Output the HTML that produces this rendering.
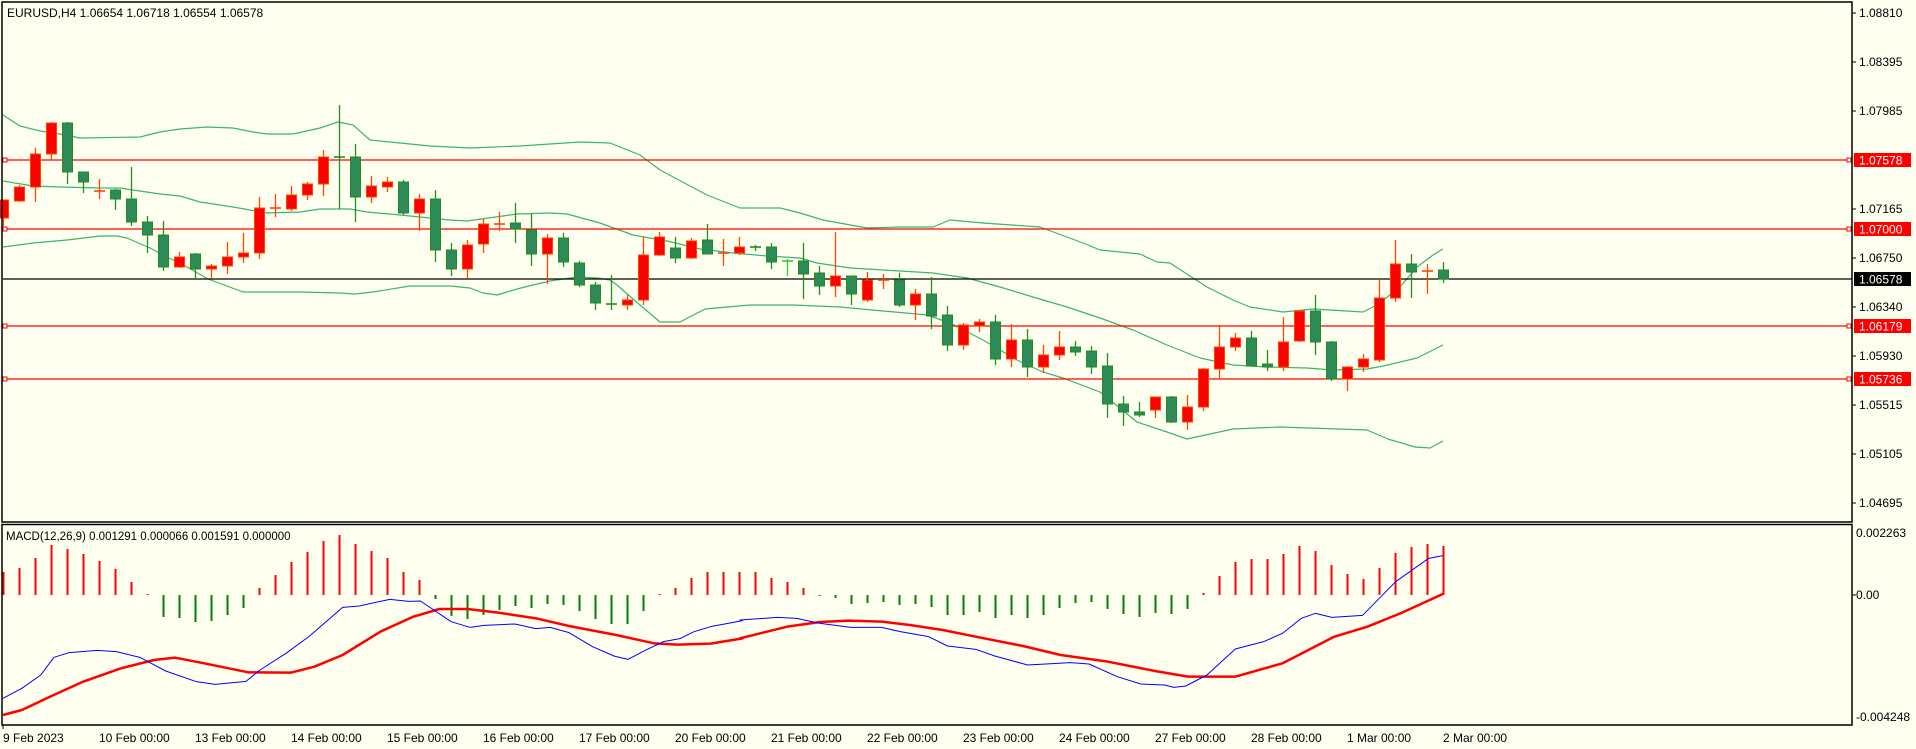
<!DOCTYPE html>
<html><head><meta charset="utf-8"><style>
html,body{margin:0;padding:0;background:#FFFFF0;}
svg{display:block;font-family:"Liberation Sans",sans-serif;font-size:12px;}
</style></head><body>
<svg id="c" width="1916" height="749" viewBox="0 0 1916 749" xmlns="http://www.w3.org/2000/svg">
<rect width="1916" height="749" fill="#FFFFF0"/>
<g id="bands" fill="none" stroke="#3CB371" stroke-width="1.2"></g>
<g id="hl"></g>
<g id="cand"></g>
<g id="macd"></g>
<rect x="2" y="2" width="1850" height="520" fill="none" stroke="#000" stroke-width="1.5"/>
<rect x="2" y="524.5" width="1850" height="200.5" fill="none" stroke="#000" stroke-width="1.5"/>
<text x="7" y="17" fill="#000">EURUSD,H4  1.06654 1.06718 1.06554 1.06578</text>
<text x="6" y="540" fill="#000" font-size="11.5">MACD(12,26,9) 0.001291 0.000066 0.001591 0.000000</text>
<g fill="#000" font-size="12">
<text x="1859" y="17">1.08810</text>
<text x="1859" y="66">1.08395</text>
<text x="1859" y="115">1.07985</text>
<text x="1859" y="213">1.07165</text>
<text x="1859" y="262">1.06750</text>
<text x="1859" y="311">1.06340</text>
<text x="1859" y="360">1.05930</text>
<text x="1859" y="409">1.05515</text>
<text x="1859" y="458">1.05105</text>
<text x="1859" y="507">1.04695</text>
<text x="1856" y="537">0.002263</text>
<text x="1856" y="599">0.00</text>
<text x="1856" y="721">-0.004248</text>
</g>
<g stroke="#000" stroke-width="1">
<line x1="1852" y1="13" x2="1856" y2="13"/><line x1="1852" y1="62" x2="1856" y2="62"/><line x1="1852" y1="111" x2="1856" y2="111"/><line x1="1852" y1="209" x2="1856" y2="209"/><line x1="1852" y1="258" x2="1856" y2="258"/><line x1="1852" y1="307" x2="1856" y2="307"/><line x1="1852" y1="356" x2="1856" y2="356"/><line x1="1852" y1="405" x2="1856" y2="405"/><line x1="1852" y1="454" x2="1856" y2="454"/><line x1="1852" y1="503" x2="1856" y2="503"/><line x1="1852" y1="595" x2="1856" y2="595"/>
</g>
<g font-size="12">
<rect x="1854" y="153" width="57" height="14" fill="#FF0000"/><text x="1859" y="164.5" fill="#fff">1.07578</text>
<rect x="1854" y="222" width="57" height="14" fill="#FF0000"/><text x="1859" y="233.5" fill="#fff">1.07000</text>
<rect x="1854" y="272" width="57" height="14" fill="#000"/><text x="1859" y="283.5" fill="#fff">1.06578</text>
<rect x="1854" y="319" width="57" height="14" fill="#FF0000"/><text x="1859" y="330.5" fill="#fff">1.06179</text>
<rect x="1854" y="372" width="57" height="14" fill="#FF0000"/><text x="1859" y="383.5" fill="#fff">1.05736</text>
</g>
<g fill="#000" font-size="12">
<text x="3" y="742">9 Feb 2023</text>
<text x="99" y="742">10 Feb 00:00</text>
<text x="195" y="742">13 Feb 00:00</text>
<text x="291" y="742">14 Feb 00:00</text>
<text x="387" y="742">15 Feb 00:00</text>
<text x="483" y="742">16 Feb 00:00</text>
<text x="579" y="742">17 Feb 00:00</text>
<text x="675" y="742">20 Feb 00:00</text>
<text x="771" y="742">21 Feb 00:00</text>
<text x="867" y="742">22 Feb 00:00</text>
<text x="963" y="742">23 Feb 00:00</text>
<text x="1059" y="742">24 Feb 00:00</text>
<text x="1155" y="742">27 Feb 00:00</text>
<text x="1251" y="742">28 Feb 00:00</text>
<text x="1347" y="742">1 Mar 00:00</text>
<text x="1443" y="742">2 Mar 00:00</text>
</g>
<g stroke="#000"><line x1="3" y1="725" x2="3" y2="729"/></g>
</svg>
<script>
var NS="http://www.w3.org/2000/svg";
function el(p,t,a){var e=document.createElementNS(NS,t);for(var k in a)e.setAttribute(k,a[k]);document.getElementById(p).appendChild(e);return e;}
function pl(p,pts,st,w){el(p,"polyline",{points:pts.map(function(q){return q[0]+","+q[1]}).join(" "),fill:"none",stroke:st,"stroke-width":w,"stroke-linejoin":"round"});}
var up=[[3,115],[20,126],[40,131],[60,134],[80,138],[140,137],[160,132],[180,129],[207,127],[233,128],[253,132],[267,134],[293,134],[320,128],[338,122],[353,125],[370,140],[400,143],[430,146],[470,148],[520,146],[580,142],[610,143],[640,155],[660,170],[707,195],[740,208],[780,208],[800,213],[823,220],[867,228],[900,227],[933,227],[950,220],[983,223],[1040,227],[1083,243],[1100,250],[1140,254],[1157,262],[1170,263],[1193,278],[1207,287],[1233,300],[1250,307],[1283,312],[1313,309],[1363,312],[1377,305],[1400,287],[1417,267],[1433,255],[1443,249]];
var mid=[[3,181],[33,186],[60,187],[100,188],[120,188],[133,190],[160,194],[180,196],[200,202],[233,207],[267,213],[300,212],[320,209],[350,209],[367,212],[400,215],[450,220],[467,221],[517,214],[550,213],[567,214],[600,223],[633,235],[667,241],[700,249],[733,253],[767,256],[800,258],[817,263],[850,268],[900,271],[933,273],[967,278],[1000,287],[1033,297],[1067,307],[1100,318],[1133,330],[1167,345],[1200,358],[1233,365],[1267,367],[1307,368],[1333,370],[1367,369],[1383,366],[1417,358],[1443,345]];
var lo=[[3,247],[33,243],[67,240],[100,236],[117,236],[127,238],[150,248],[167,257],[187,267],[208,279],[243,292],[300,292],[340,293],[355,294],[373,292],[410,286],[450,286],[470,288],[483,293],[497,295],[517,289],[533,285],[550,281],[577,277],[597,278],[610,280],[617,285],[640,305],[660,322],[680,322],[705,309],[750,305],[793,305],[840,307],[883,311],[917,314],[927,315],[950,323],[983,340],[1017,360],[1043,372],[1063,378],[1100,392],[1137,422],[1167,432],[1187,439],[1233,429],[1280,427],[1367,430],[1388,439],[1415,447],[1430,448],[1443,441]];
pl("bands",up,"#3CB371",1.2);pl("bands",mid,"#3CB371",1.2);pl("bands",lo,"#3CB371",1.2);
[[160,"#FF0000"],[229,"#FF0000"],[326,"#FF0000"],[379,"#FF0000"]].forEach(function(h){
 el("hl","line",{x1:3,x2:1852,y1:h[0],y2:h[0],stroke:h[1],"stroke-width":1.2});
 el("hl","rect",{x:3,y:h[0]-2,width:4,height:4,fill:"#fff",stroke:h[1],"stroke-width":1});
 el("hl","rect",{x:1847,y:h[0]-2,width:4,height:4,fill:"#fff",stroke:h[1],"stroke-width":1});
});
el("hl","line",{x1:3,x2:1852,y1:279,y2:279,stroke:"#000","stroke-width":1.2});
var C=[
["r",200,218,200,226],["r",187,201,185,202],["r",154,187,148,202],["r",123,154,122,160],["g",123,172,122,184],
["g",172,182,172,193],["rd",191,191,179,199],["g",190,199,189,210],["g",199,222,167,226],["g",222,235,216,253],
["g",235,267,221,271],["r",257,267,252,268],["g",254,269,253,280],["r",266,269,264,278],["r",257,266,242,274],
["r",253,257,233,263],["r",208,253,197,259],["rd",208,208,194,217],["r",195,209,186,211],["r",184,195,182,200],
["r",157,184,150,196],["gd",157,157,105,209],["g",157,197,144,222],["r",186,197,176,203],["r",182,187,177,192],
["g",182,213,180,215],["r",199,213,194,231],["g",199,250,190,262],["g",250,269,243,276],["r",245,269,240,278],
["r",224,244,219,253],["rd",224,224,212,231],["g",223,229,203,243],["g",230,254,214,266],["r",238,254,234,284],
["g",238,262,233,267],["g",263,285,261,287],["g",285,303,282,310],["gd",304,304,275,310],["r",300,305,295,310],
["r",255,300,237,305],["r",237,255,232,256],["g",248,258,237,263],["r",241,258,238,259],["g",240,254,224,254],
["rd",253,253,239,266],["r",247,253,237,255],["gd",247,247,245,251],["g",247,262,243,269],["ld",261,261,259,276],
["g",261,274,243,299],["g",273,286,266,295],["r",276,286,232,297],["g",276,294,276,305],["r",280,300,272,302],
["rd",280,280,274,289],["g",280,305,273,307],["r",294,305,289,320],["g",294,316,277,329],["g",315,345,306,351],
["r",325,345,323,350],["r",322,326,319,332],["g",322,359,315,365],["r",340,359,324,367],["g",340,367,329,377],
["r",355,367,345,373],["r",347,355,331,360],["g",347,352,341,356],["g",351,367,346,374],["g",366,404,353,418],
["g",404,412,396,426],["g",412,415,402,417],["r",397,410,397,418],["g",397,422,396,423],["r",407,422,395,430],
["r",369,407,368,411],["r",347,369,325,379],["r",338,347,333,351],["g",338,366,331,366],["g",364,367,350,371],
["r",342,367,317,371],["r",311,341,310,342],["g",311,342,295,355],["g",342,379,341,381],["r",367,379,366,391],
["r",359,367,354,372],["r",298,360,279,362],["r",264,298,240,302],["g",264,272,254,298],["rd",271,271,264,294],
["g",270,279,262,283]];
C.forEach(function(c,i){
 var x=3.5+16*i,t=c[0];
 var red=t[0]=="r",lime=t[0]=="l";
 var wc=red?"#FF4500":(lime?"#32CD32":"#228B22");
 el("cand","line",{x1:x,x2:x,y1:c[3],y2:c[4],stroke:wc,"stroke-width":1.3});
 if(t.length>1){el("cand","line",{x1:x-5.5,x2:x+5.5,y1:c[1],y2:c[1],stroke:wc,"stroke-width":1.6});}
 else{var h=Math.max(c[2]-c[1],2);el("cand","rect",{x:x-5,y:c[1],width:10,height:h,fill:red?"#FF0000":"#2E8B57",stroke:red?"#FF4500":"#228B22","stroke-width":1});}
});
var H=[572,568,558,545,549,554,561,569,582,594,617,618,622,621,615,608,588,575,562,552,541,535,544,551,558,572,580,599,616,619,615,610,606,608,604,605,611,619,624,624,611,594,588,578,572,572,572,572,578,582,588,596,598,604,603,602,605,604,607,615,615,612,618,615,618,615,608,603,602,609,614,617,613,614,609,593,576,562,559,559,554,546,551,565,574,579,568,553,547,544,546];
H.forEach(function(y,i){var x=3.5+16*i;el("macd","line",{x1:x,x2:x,y1:595,y2:y,stroke:y<595?"#FF0000":"#008000","stroke-width":2});});
function cv(a,x0){return a.map(function(p){return [x0+p[0]/2.12,520+p[1]/3];});}
var b1=cv([[0,535],[40,505],[80,465],[108,412],[140,398],[200,391],[240,395],[290,412],[345,453],[410,485],[450,493],[515,484],[545,450],[600,400],[650,348],[720,262],[755,258],[820,238],[860,244],[885,243],[950,305],[990,322],[1020,316],[1085,312],[1130,326],[1160,322],[1200,338],[1250,380],[1295,408],[1325,418],[1360,392],[1400,365],[1435,356],[1465,335],[1500,320],[1568,302]],3);
var b2=cv([[0,300],[80,292],[120,295],[170,310],[235,322],[300,322],[340,335],[400,350],[440,378],[500,388],[540,408],[610,435],[700,428],[740,432],[800,470],[850,492],[900,495],[920,502],[945,498],[990,465],[1050,387],[1110,365],[1150,340],[1190,295],[1220,280],[1255,292],[1320,286],[1390,185],[1460,115],[1490,107]],740);
var r1=cv([[0,585],[40,570],[100,530],[170,485],[250,445],[320,420],[365,413],[420,428],[520,457],[610,458],[660,440],[720,405],[800,335],[870,290],[925,267],[985,267],[1050,278],[1130,295],[1200,318],[1300,345],[1380,370],[1430,374],[1500,371],[1568,355]],3);
var r2=cv([[0,355],[100,320],[170,306],[230,302],[300,305],[360,315],[430,330],[500,350],[600,378],[680,405],[780,425],[880,453],[950,470],[1050,470],[1150,430],[1260,350],[1330,320],[1400,280],[1490,222]],740);
pl("macd",r1.concat(r2),"#FF0000",2.5);
pl("macd",b1.concat(b2),"#0000FF",1);
</script>
</body></html>
